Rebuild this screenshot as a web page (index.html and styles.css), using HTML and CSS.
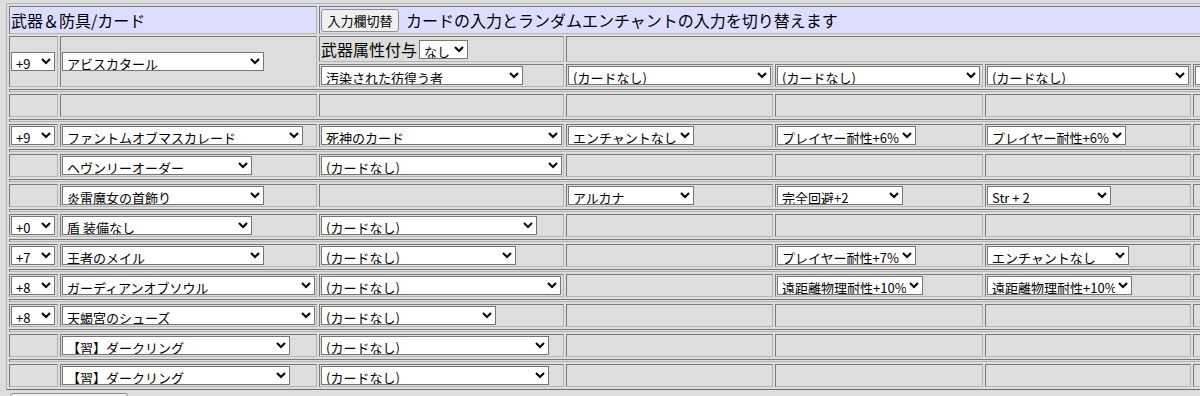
FILE: index.html
```html
<!DOCTYPE html>
<html lang="ja">
<head>
<meta charset="utf-8">
<title>武器＆防具/カード</title>
<link rel="stylesheet" href="styles.css">
</head>
<body>
<table class="equip">
  <colgroup>
    <col class="c-refine"><col class="c-item"><col class="c-card"><col class="c-e1"><col class="c-e2"><col class="c-e3"><col class="c-e4">
  </colgroup>
  <tbody>
    <tr class="hdr">
      <td colspan="2" class="title">武器＆防具/カード</td>
      <td colspan="5" class="title"><div class="hdr-line"><button type="button" class="btn-toggle">入力欄切替</button><span class="hdr-text">カードの入力とランダムエンチャントの入力を切り替えます</span></div></td>
    </tr>
    <tr class="sub1">
      <td rowspan="2"><select class="s-ref"><option>+9</option></select></td>
      <td rowspan="2"><select class="w202"><option>アビスカタール</option></select></td>
      <td><div class="attr"><span class="attr-label">武器属性付与</span><select class="w49"><option>なし</option></select></div></td>
      <td colspan="4"></td>
    </tr>
    <tr class="item">
      <td><select class="w202"><option>汚染された彷徨う者</option></select></td>
      <td><select class="w203"><option>(カードなし)</option></select></td>
      <td><select class="w203"><option>(カードなし)</option></select></td>
      <td><select class="w202"><option>(カードなし)</option></select></td>
      <td><select class="w202"><option>(カードなし)</option></select></td>
    </tr>
    <tr class="sep"><td colspan="7"></td></tr>
    <tr class="item">
      <td></td><td></td><td></td><td></td><td></td><td></td><td></td>
    </tr>
    <tr class="sep"><td colspan="7"></td></tr>
    <tr class="item">
      <td><select class="s-ref"><option>+9</option></select></td>
      <td><select class="w241"><option>ファントムオブマスカレード</option></select></td>
      <td><select class="w241"><option>死神のカード</option></select></td>
      <td><select class="w126"><option>エンチャントなし</option></select></td>
      <td><select class="w139"><option>プレイヤー耐性+6%</option></select></td>
      <td><select class="w139"><option>プレイヤー耐性+6%</option></select></td>
      <td></td>
    </tr>
    <tr class="sep"><td colspan="7"></td></tr>
    <tr class="item">
      <td></td>
      <td><select class="w190"><option>ヘヴンリーオーダー</option></select></td>
      <td><select class="w241"><option>(カードなし)</option></select></td>
      <td></td><td></td><td></td><td></td>
    </tr>
    <tr class="sep"><td colspan="7"></td></tr>
    <tr class="item">
      <td></td>
      <td><select class="w202"><option>炎雷魔女の首飾り</option></select></td>
      <td></td>
      <td><select class="w126"><option>アルカナ</option></select></td>
      <td><select class="w126"><option>完全回避+2</option></select></td>
      <td><select class="w124"><option>Str + 2</option></select></td>
      <td></td>
    </tr>
    <tr class="sep"><td colspan="7"></td></tr>
    <tr class="item">
      <td><select class="s-ref"><option>+0</option></select></td>
      <td><select class="w190"><option>盾 装備なし</option></select></td>
      <td><select class="w216"><option>(カードなし)</option></select></td>
      <td></td><td></td><td></td><td></td>
    </tr>
    <tr class="sep"><td colspan="7"></td></tr>
    <tr class="item">
      <td><select class="s-ref"><option>+7</option></select></td>
      <td><select class="w202"><option>王者のメイル</option></select></td>
      <td><select class="w195"><option>(カードなし)</option></select></td>
      <td></td>
      <td><select class="w139"><option>プレイヤー耐性+7%</option></select></td>
      <td><select class="w142"><option>エンチャントなし</option></select></td>
      <td></td>
    </tr>
    <tr class="sep"><td colspan="7"></td></tr>
    <tr class="item">
      <td><select class="s-ref"><option>+8</option></select></td>
      <td><select class="w253"><option>ガーディアンオブソウル</option></select></td>
      <td><select class="w240"><option>(カードなし)</option></select></td>
      <td></td>
      <td><select class="w146"><option>遠距離物理耐性+10%</option></select></td>
      <td><select class="w145"><option>遠距離物理耐性+10%</option></select></td>
      <td></td>
    </tr>
    <tr class="sep"><td colspan="7"></td></tr>
    <tr class="item">
      <td><select class="s-ref"><option>+8</option></select></td>
      <td><select class="w253"><option>天蝎宮のシューズ</option></select></td>
      <td><select class="w175"><option>(カードなし)</option></select></td>
      <td></td><td></td><td></td><td></td>
    </tr>
    <tr class="sep"><td colspan="7"></td></tr>
    <tr class="item">
      <td></td>
      <td><select class="w228"><option>【習】ダークリング</option></select></td>
      <td><select class="w228"><option>(カードなし)</option></select></td>
      <td></td><td></td><td></td><td></td>
    </tr>
    <tr class="sep"><td colspan="7"></td></tr>
    <tr class="item">
      <td></td>
      <td><select class="w228"><option>【習】ダークリング</option></select></td>
      <td><select class="w228"><option>(カードなし)</option></select></td>
      <td></td><td></td><td></td><td></td>
    </tr>
  </tbody>
</table>
<button type="button" class="btn-bottom" aria-label="入力内容を保存"></button>
</body>
</html>
```
FILE: styles.css
```css
html, body {
  margin: 0;
  background: #dddddd;
}
body {
  padding: 3px 0 0 6px;
  overflow: hidden;
  font-family: "Noto Sans CJK JP", "Noto Sans", sans-serif;
  color: #000;
}
.equip {
  border-collapse: separate;
  border-spacing: 2px;
  border: 1px solid;
  border-color: #b4b4b4 #6e6e6e #6e6e6e #b4b4b4;
  table-layout: fixed;
  width: 1396px;
  background: #dddddd;
}
.c-refine { width: 49px; }
.c-item { width: 257px; }
.c-card { width: 245px; }
.c-e1 { width: 207px; }
.c-e2 { width: 208px; }
.c-e3 { width: 206px; }
.c-e4 { width: 206px; }

.equip td {
  border: 1px solid;
  border-color: #7a7a7a #b4b4b4 #b4b4b4 #7a7a7a;
  padding: 1px;
  vertical-align: middle;
  white-space: nowrap;
  line-height: 1;
  overflow: hidden;
}
.hdr { height: 28px; }
.sub1 { height: 26px; }
.item { height: 23px; }
.sep { height: 3px; }
.sep td { padding: 0; }

.title {
  background: #ddddff;
  font-size: 16px;
  line-height: 20px;
}
.hdr-line {
  display: flex;
  align-items: center;
}
.btn-toggle {
  box-sizing: border-box;
  width: 78px;
  height: 23px;
  padding: 0;
  font-family: "Noto Sans CJK JP", "Noto Sans", sans-serif;
  font-size: 13px;
  line-height: 1;
  color: #000;
  background: #efefef;
  border: 1px solid #8f8f8f;
  border-radius: 3px;
}
.hdr-text { margin-left: 7px; }

.attr {
  display: flex;
  align-items: center;
  font-size: 16px;
  line-height: 20px;
}
.attr-label { margin-right: 2px; }

select {
  display: block;
  box-sizing: border-box;
  height: 19px;
  margin: 0;
  font-family: "Noto Sans CJK JP", "Noto Sans", sans-serif;
  font-size: 13px;
  color: #000;
  background-color: #fff;
}
.attr select { display: inline-block; }
.s-ref { width: 44px; }
.w49 { width: 49px; }
.w124 { width: 124px; }
.w126 { width: 126px; }
.w139 { width: 139px; }
.w142 { width: 142px; }
.w145 { width: 145px; }
.w146 { width: 146px; }
.w175 { width: 175px; }
.w190 { width: 190px; }
.w195 { width: 195px; }
.w202 { width: 202px; }
.w203 { width: 203px; }
.w216 { width: 216px; }
.w228 { width: 228px; }
.w240 { width: 240px; }
.w241 { width: 241px; }
.w253 { width: 253px; }

.btn-bottom {
  display: block;
  box-sizing: border-box;
  width: 118px;
  height: 24px;
  margin: 3px 0 0 4px;
  padding: 0;
  background: #efefef;
  border: 1px solid #8f8f8f;
  border-radius: 3px;
}
```
